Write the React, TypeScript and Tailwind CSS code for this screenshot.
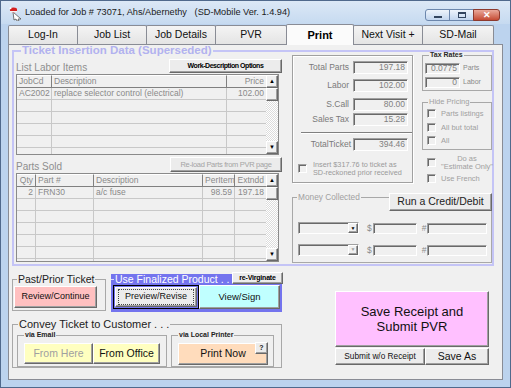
import React from "react";

const FONT = "font-['Liberation_Sans',Arial,sans-serif]";
const RAISED =
  "border border-t-white border-l-white border-r-[#696969] border-b-[#696969] shadow-[inset_-1px_-1px_0_#a0a0a0]";
const SUNKEN =
  "border border-t-[#a0a0a0] border-l-[#a0a0a0] border-r-white border-b-white shadow-[inset_1px_1px_0_#696969]";

const Btn = ({ className = "", children }: { className?: string; children?: React.ReactNode }) => (
  <div className={`flex items-center justify-center text-center ${RAISED} ${className}`}>{children}</div>
);

const Box = ({ className = "", children }: { className?: string; children?: React.ReactNode }) => (
  <div className={`flex items-center justify-end pr-[2px] bg-[#f0f0f0] text-[#808080] ${SUNKEN} ${className}`}>{children}</div>
);

const Check = ({ className = "" }: { className?: string }) => (
  <div className={`w-[9px] h-[9px] shrink-0 bg-[#f0f0f0] ${SUNKEN} ${className}`} />
);

const Scroll = () => (
  <div className="w-[13px] h-full flex flex-col bg-[repeating-conic-gradient(#dcdcdc_0_25%,#ffffff_0_50%)] bg-[length:2px_2px]">
    <Btn className="h-[13px] bg-[#f0f0f0] text-[6px] text-black">▲</Btn>
    <Btn className="h-[13px] bg-[#f0f0f0]" />
    <div className="flex-1" />
    <Btn className="h-[13px] bg-[#f0f0f0] text-[6px] text-black">▼</Btn>
  </div>
);

const Head = ({ children, right = false, last = false }: { children?: React.ReactNode; right?: boolean; last?: boolean }) => (
  <div
    className={`h-[13px] px-[2px] flex items-center bg-[#f0f0f0] border-t border-t-white border-b border-b-[#808080] ${
      last ? "" : "border-r border-r-[#808080]"
    } ${right ? "justify-end" : ""}`}
  >
    {children}
  </div>
);

const Cell = ({ children, right = false, last = false }: { children?: React.ReactNode; right?: boolean; last?: boolean }) => (
  <div
    className={`h-[12px] px-[2px] flex items-center whitespace-nowrap overflow-hidden border-b border-b-[#c8c8c8] ${
      last ? "" : "border-r border-r-[#c8c8c8]"
    } ${right ? "justify-end" : ""}`}
  >
    {children}
  </div>
);

const tabs = [
  { label: "Log-In", w: "w-[70px]" },
  { label: "Job List", w: "w-[70px]" },
  { label: "Job Details", w: "w-[70px]" },
  { label: "PVR", w: "w-[72px]" },
  { label: "Print", w: "w-[68px]", active: true },
  { label: "Next Visit +", w: "w-[70px]" },
  { label: "SD-Mail", w: "w-[72px]" },
];

const laborRows = [["AC2002", "replace selector control (electrical)", "102.00"], ["", "", ""], ["", "", ""], ["", "", ""], ["", "", ""], ["", "", ""]];
const partRows = [["2", "FRN30", "a/c fuse", "98.59", "197.18"], ["", "", "", "", ""], ["", "", "", "", ""], ["", "", "", "", ""], ["", "", "", "", ""], ["", "", "", "", ""], ["", "", "", "", ""]];

const totals = [
  { label: "Total Parts", value: "197.18", mt: "mt-[5px]" },
  { label: "Labor", value: "102.00", mt: "mt-[5px]" },
  { label: "S.Call", value: "80.00", mt: "mt-[6px]" },
  { label: "Sales Tax", value: "15.28", mt: "mt-[2px]" },
];

export default function App() {
  return (
    <div className={`w-[511px] h-[388px] ${FONT} bg-[#bcd3ee] border border-[#50698c] flex flex-col overflow-hidden`}>
      {/* title bar */}
      <div className="h-[23px] flex items-start bg-gradient-to-b from-[#dce8f6] to-[#c6daf0]">
        <svg width="15" height="15" viewBox="0 0 15 15" className="ml-[8px] mt-[5px]">
          <path d="M4 6 L12 13 L9 13 L10 15 L8 15 L7 13 L5 14 Z" fill="#ffffff" stroke="#555" strokeWidth="0.8" />
          <ellipse cx="4.5" cy="4" rx="3.6" ry="2.4" fill="#d42020" />
          <rect x="1" y="5" width="7" height="1.4" fill="#f4f4f4" />
          <circle cx="1.5" cy="2.2" r="1" fill="#fff" />
        </svg>
        <div className="ml-[1px] mt-[6px] text-[9.2px] leading-[11px] text-[#1b1b1b] whitespace-pre">
          Loaded for Job # 73071, Ahs/Abernethy   (SD-Mobile Ver. 1.4.94)
        </div>
        <div className="ml-auto mr-[10px] mt-[8px] flex">
          <div className="w-[25px] h-[12px] rounded-l-[3px] border border-[#6c87ad] bg-gradient-to-b from-[#eef4fb] to-[#c3d6ee] flex items-end justify-center pb-[2px]">
            <div className="w-[8px] h-[2px] bg-[#33455e]" />
          </div>
          <div className="w-[25px] h-[12px] -ml-px border border-[#6c87ad] bg-gradient-to-b from-[#eef4fb] to-[#c3d6ee] flex items-center justify-center">
            <div className="w-[8px] h-[6px] border border-[#33455e] border-t-2" />
          </div>
          <div className="w-[27px] h-[12px] -ml-px rounded-r-[3px] border border-[#8d3a2e] bg-gradient-to-b from-[#e9a89a] to-[#c44a33] flex items-center justify-center text-white text-[9px] font-bold leading-none">
            ✕
          </div>
        </div>
      </div>

      {/* client */}
      <div className="flex-1 flex flex-col px-[7px] pb-[7px]">
        {/* tab strip */}
        <div className="h-[20px] flex items-end">
          {tabs.map((t, i) =>
            t.active ? (
              <div
                key={t.label}
                className={`${t.w} h-[21px] -mb-px -ml-px relative z-10 border border-b-0 border-[#898c95] rounded-t-[2px] bg-[#fbfbfb] flex items-center justify-center text-[11px] font-bold text-black`}
              >
                {t.label}
              </div>
            ) : (
              <div
                key={t.label}
                className={`${t.w} h-[19px] ${i === 0 ? "" : "-ml-px"} border border-b-0 border-[#898c95] rounded-t-[2px] bg-gradient-to-b from-[#f4f4f4] to-[#e4e4e4] flex items-center justify-center text-[10.5px] text-[#111]`}
              >
                {t.label}
              </div>
            )
          )}
        </div>

        {/* tab page */}
        <div className="h-[336px] border border-[#898c95] bg-[#f0f0f0] flex flex-col">
          <fieldset className="ml-[3px] -mt-px w-[482px] h-[222px] border-2 border-[#c4c4f6]">
            <legend className="ml-[7px] px-px text-[11.5px] leading-[13px] font-bold text-[#b2b2ef]">
              Ticket Insertion Data (Superseded)
            </legend>
            <div className="flex items-start">
              {/* left column */}
              <div className="ml-[2px] w-[266px] flex flex-col">
                <div className="mt-px h-[15px] flex items-end justify-between">
                  <span className="text-[10px] leading-[11px] text-[#8e8e8e]">List Labor Items</span>
                  <Btn className="w-[113px] h-[14px] bg-[#ececec] text-[7px] font-bold tracking-[-0.45px] text-black">
                    Work-Description Options
                  </Btn>
                </div>
                <div className="mt-px w-[263px] h-[81px] border border-[#8a8a8a] flex overflow-hidden text-[8.5px] text-[#8a8a8a]">
                  <div className="w-[249px] grid grid-cols-[35px_175px_39px] content-start">
                    <Head>JobCd</Head>
                    <Head>Description</Head>
                    <Head right last>Price</Head>
                    {laborRows.map((r, i) => (
                      <React.Fragment key={i}>
                        <Cell>{r[0]}</Cell>
                        <Cell>{r[1]}</Cell>
                        <Cell right last>{r[2]}</Cell>
                      </React.Fragment>
                    ))}
                  </div>
                  <Scroll />
                </div>

                <div className="mt-[2px] h-[15px] flex items-end justify-between">
                  <span className="text-[10px] leading-[11px] text-[#8e8e8e]">Parts Sold</span>
                  <Btn className="w-[112px] h-[15px] bg-[#ececec] text-[7.5px] tracking-[-0.3px] text-[#a4a4a4]">
                    Re-load Parts from PVR page
                  </Btn>
                </div>
                <div className="mt-px w-[263px] h-[89px] border border-[#8a8a8a] flex overflow-hidden text-[8.5px] text-[#8a8a8a]">
                  <div className="w-[249px] grid grid-cols-[19px_58px_109px_32px_31px] content-start">
                    <Head right>Qty</Head>
                    <Head>Part #</Head>
                    <Head>Description</Head>
                    <Head>PerItem</Head>
                    <Head right last>Extndd</Head>
                    {partRows.map((r, i) => (
                      <React.Fragment key={i}>
                        <Cell right>{r[0]}</Cell>
                        <Cell>{r[1]}</Cell>
                        <Cell>{r[2]}</Cell>
                        <Cell right>{r[3]}</Cell>
                        <Cell right last>{r[4]}</Cell>
                      </React.Fragment>
                    ))}
                  </div>
                  <Scroll />
                </div>
              </div>

              {/* right area */}
              <div className="ml-[10px] -mt-[2px] flex flex-col">
                <div className="flex items-start h-[128px]">
                  <div className="w-[121px] h-[128px] border border-[#a0a0a0] shadow-[inset_1px_1px_0_#ffffff,1px_1px_0_#ffffff] flex flex-col">
                    {totals.map((t) => (
                      <div key={t.label} className={`${t.mt} h-[13px] flex items-center justify-end pr-[4px] gap-[4px]`}>
                        <span className="text-[8.5px] text-[#7a7a7a]">{t.label}</span>
                        <Box className="w-[55px] h-[13px] text-[8.5px]">{t.value}</Box>
                      </div>
                    ))}
                    <div className="mt-[6px] ml-[8px] h-[2px] border-t border-t-[#808080] border-b border-b-white" />
                    <div className="mt-[4px] h-[13px] flex items-center justify-end pr-[4px] gap-[2px]">
                      <span className="text-[8.5px] text-[#7a7a7a]">TotalTicket</span>
                      <Box className="w-[55px] h-[13px] text-[8.5px]">394.46</Box>
                    </div>
                    <div className="mt-[10px] ml-[5px] flex items-center">
                      <Check />
                      <div className="ml-[6px] text-[7.3px] leading-[7.5px] text-[#9a9a9a] whitespace-nowrap">
                        Insert $317.76 to ticket as
                        <br />
                        SD-reckoned prior received
                      </div>
                    </div>
                  </div>

                  <div className="ml-[9px] w-[70px] flex flex-col">
                    <fieldset className="-mt-[4px] h-[40px] border border-[#a8a8a8]">
                      <legend className="ml-[6px] px-px text-[7px] leading-[8px] font-bold text-[#2a2a2a]">Tax Rates</legend>
                      <div className="mt-[4px] ml-[2px] flex items-center">
                        <Box className="w-[35px] h-[11px] text-[8.5px]">0.0775</Box>
                        <span className="ml-[3px] text-[7px] text-[#8a8a8a]">Parts</span>
                      </div>
                      <div className="mt-[3px] ml-[2px] flex items-center">
                        <Box className="w-[35px] h-[11px] text-[8.5px]">0</Box>
                        <span className="ml-[3px] text-[7px] text-[#8a8a8a]">Labor</span>
                      </div>
                    </fieldset>
                    <fieldset className="mt-[7px] h-[52px] border border-[#a8a8a8]">
                      <legend className="ml-[5px] px-px text-[7.5px] leading-[8px] text-[#a0a0a0]">Hide Pricing</legend>
                      <div className="mt-[3px] ml-[4px] flex items-center">
                        <Check />
                        <span className="ml-[5px] text-[7.5px] leading-[9px] text-[#a0a0a0] whitespace-nowrap">Parts listings</span>
                      </div>
                      <div className="mt-[5px] ml-[4px] flex items-center">
                        <Check />
                        <span className="ml-[5px] text-[7.5px] leading-[9px] text-[#a0a0a0] whitespace-nowrap">All but total</span>
                      </div>
                      <div className="mt-[4px] ml-[4px] flex items-center">
                        <Check />
                        <span className="ml-[5px] text-[7.5px] leading-[9px] text-[#a0a0a0]">All</span>
                      </div>
                    </fieldset>
                    <div className="mt-[5px] ml-[5px] flex items-center">
                      <Check />
                      <div className="ml-[5px] text-center text-[7.5px] leading-[7.5px] text-[#a0a0a0] whitespace-nowrap">
                        Do as
                        <br />
                        "Estimate Only"
                      </div>
                    </div>
                    <div className="mt-[4px] ml-[5px] flex items-center">
                      <Check />
                      <span className="ml-[5px] text-[7.5px] leading-[9px] text-[#a0a0a0] whitespace-nowrap">Use French</span>
                    </div>
                  </div>
                </div>

                <div className="relative mt-[9px] w-[200px]">
                  <fieldset className="h-[71px] border border-[#a8a8a8]">
                    <legend className="ml-[4px] px-px text-[8.3px] leading-[10px] text-[#a0a0a0]">Money Collected</legend>
                    {[0, 1].map((i) => (
                      <div key={i} className={`${i === 0 ? "mt-[20px]" : "mt-[9px]"} ml-[5px] flex items-center`}>
                        <div className={`w-[61px] h-[12px] bg-[#f0f0f0] flex justify-end ${SUNKEN}`}>
                          <Btn className={`w-[10px] h-full bg-[#f0f0f0] text-[5px] ${i === 0 ? "text-black" : "text-[#a0a0a0]"}`}>▼</Btn>
                        </div>
                        <span className="ml-[8px] text-[8.5px] text-[#8a8a8a]">$</span>
                        <Box className="ml-px w-[44px] h-[11px]" />
                        <span className="ml-[5px] text-[8.5px] text-[#8a8a8a]">#</span>
                        <Box className="ml-px w-[60px] h-[11px]" />
                      </div>
                    ))}
                  </fieldset>
                  <Btn className="absolute right-0 top-px w-[103px] h-[18px] bg-[#ececec] text-[10.5px] text-[#222]">
                    Run a Credit/Debit
                  </Btn>
                </div>
              </div>
            </div>
          </fieldset>

          {/* bottom section */}
          <div className="flex items-start">
            <div className="ml-[3px] w-[270px] flex flex-col">
              <div className="flex items-start">
                <fieldset className="mt-[7px] w-[94px] h-[38px] border border-[#a8a8a8]">
                  <legend className="ml-[4px] px-px text-[10.5px] leading-[12px] text-[#222]">Past/Prior Ticket</legend>
                  <Btn className="mt-px ml-px w-[83px] h-[22px] bg-[#ffc0c0] text-[9px] text-[#111]">Review/Continue</Btn>
                </fieldset>
                <div className="ml-[5px] mt-[8px] w-[171px] h-[38px] bg-[#7474ee] flex flex-col">
                  <div className="h-[11px] flex items-start justify-between">
                    <div className="flex items-center">
                      <div className="w-[3px] h-px bg-[#dcdcff]" />
                      <span className="ml-px text-[10.5px] leading-[11px] text-white">Use Finalized Product . .</span>
                    </div>
                    <Btn className="-mt-[2px] -mr-px w-[51px] h-[12px] bg-[#ececec] text-[7px] font-bold tracking-[-0.2px] text-black">
                      re-Virginate
                    </Btn>
                  </div>
                  <div className="ml-[2px] flex">
                    <div className="w-[86px] h-[24px] border border-black p-[1px]">
                      <div className={`w-full h-full ${RAISED} bg-[#ececec] flex items-center justify-center`}>
                        <div className="w-[76px] h-[16px] border border-dotted border-[#444] flex items-center justify-center text-[9px] text-[#111]">
                          Preview/Revise
                        </div>
                      </div>
                    </div>
                    <Btn className="w-[81px] h-[24px] bg-[#c0ffff] text-[9.5px] text-[#111]">View/Sign</Btn>
                  </div>
                </div>
              </div>

              <fieldset className="mt-[6px] w-[270px] h-[50px] border border-[#a8a8a8]">
                <legend className="ml-[5px] px-px text-[11px] leading-[12px] text-[#222]">Convey Ticket to Customer . . .</legend>
                <div className="ml-[4px] flex items-start">
                  <fieldset className="mt-px w-[150px] h-[36px] border border-[#a8a8a8]">
                    <legend className="ml-[6px] px-px text-[7px] leading-[8px] font-bold text-[#222]">via Email</legend>
                    <div className="mt-[4px] ml-[6px] flex">
                      <Btn className="w-[69px] h-[21px] bg-[#ffffc0] text-[10.5px] text-[#a0a0a0]">From Here</Btn>
                      <Btn className="w-[67px] h-[21px] bg-[#ffffc0] text-[10.5px] text-[#111]">From Office</Btn>
                    </div>
                  </fieldset>
                  <fieldset className="mt-px ml-[4px] w-[103px] h-[36px] border border-[#a8a8a8]">
                    <legend className="ml-[6px] px-px text-[7px] leading-[8px] font-bold text-[#222]">via Local Printer</legend>
                    <div className="relative mt-[4px] ml-[6px] w-[90px] h-[22px]">
                      <Btn className="w-full h-full bg-[#ffdcbc] text-[10.5px] text-[#111]">Print Now</Btn>
                      <Btn className="absolute right-0 -top-px w-[13px] h-[12px] bg-[#ececec] text-[7px] font-bold text-[#222]">?</Btn>
                    </div>
                  </fieldset>
                </div>
              </fieldset>
            </div>

            <div className="ml-[53px] mt-[25px] w-[154px] flex flex-col">
              <Btn className="h-[56px] bg-[#ffc0ff] text-[13px] leading-[15px] text-[#111]">
                Save Receipt and
                <br />
                Submit PVR
              </Btn>
              <div className="mt-px flex">
                <Btn className="w-[90px] h-[17px] bg-[#ececec] text-[8.3px] text-[#111]">Submit w/o Receipt</Btn>
                <Btn className="w-[64px] h-[17px] bg-[#ececec] text-[10.5px] text-[#111]">Save As</Btn>
              </div>
            </div>
          </div>
        </div>
      </div>
    </div>
  );
}
